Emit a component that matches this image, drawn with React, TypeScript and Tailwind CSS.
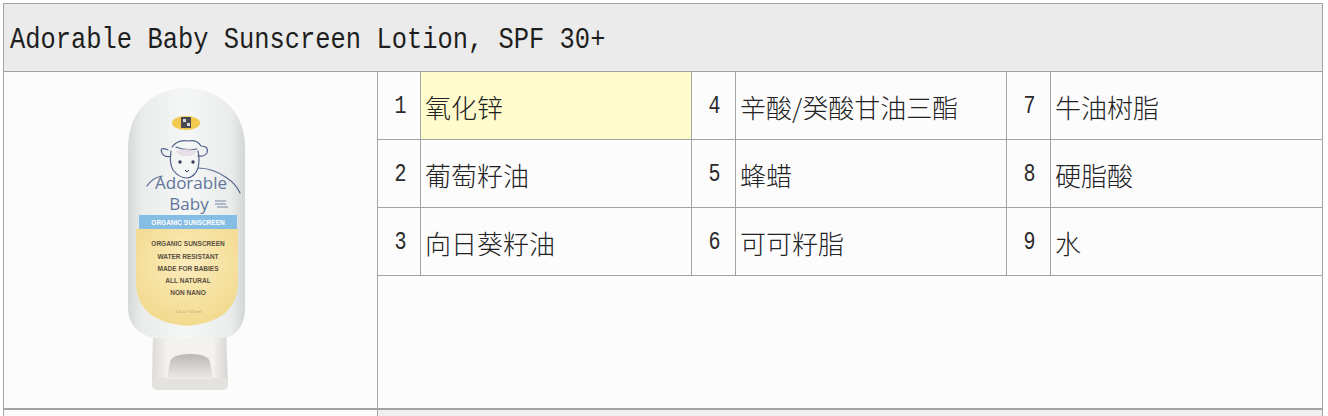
import React from "react";

const items: [string, string][] = [
  ["1", "氧化锌"],
  ["4", "辛酸/癸酸甘油三酯"],
  ["7", "牛油树脂"],
  ["2", "葡萄籽油"],
  ["5", "蜂蜡"],
  ["8", "硬脂酸"],
  ["3", "向日葵籽油"],
  ["6", "可可籽脂"],
  ["9", "水"],
];

function Bottle() {
  return (
    <svg width="373" height="337" viewBox="4 72 373 337" className="block">
      <defs>
        <linearGradient id="body" x1="0" x2="1" y1="0" y2="0">
          <stop offset="0" stopColor="#d6d9d9" />
          <stop offset="0.12" stopColor="#eaecec" />
          <stop offset="0.5" stopColor="#f5f6f6" />
          <stop offset="0.88" stopColor="#eaecec" />
          <stop offset="1" stopColor="#d3d6d6" />
        </linearGradient>
        <linearGradient id="cap" x1="0" x2="1" y1="0" y2="0">
          <stop offset="0" stopColor="#dcdad6" />
          <stop offset="0.2" stopColor="#f3f2ef" />
          <stop offset="0.8" stopColor="#f3f2ef" />
          <stop offset="1" stopColor="#d7d5d1" />
        </linearGradient>
        <radialGradient id="label" cx="0.5" cy="0.35" r="0.7">
          <stop offset="0" stopColor="#fbecbc" />
          <stop offset="1" stopColor="#f1d88a" />
        </radialGradient>
        <linearGradient id="notch" x1="0" x2="0" y1="0" y2="1">
          <stop offset="0" stopColor="#bbb8b3" />
          <stop offset="1" stopColor="#ecebe8" />
        </linearGradient>
      </defs>
      {/* cap */}
      <path d="M153,330 L226,330 L228,384 Q228,390 221,390 L159,390 Q152,390 152,384 Z" fill="url(#cap)" />
      <path d="M152,378 L228,378 L228,384 Q228,390 221,390 L159,390 Q152,390 152,384 Z" fill="#e4e2de" />
      <path d="M167,379 L170,362 Q172,354 190,354 Q208,354 210,362 L213,379 Z" fill="url(#notch)" />
      {/* body */}
      <path
        d="M128,148 C128,108 156,88 186,88 C216,88 245,108 245,148 L245,308 C245,326 236,336 224,338 L155,338 C141,336 128,326 128,308 Z"
        fill="url(#body)"
      />
      {/* yellow label */}
      <path d="M136,229 L238,229 L238,285 Q236,322 187,326 Q138,322 136,285 Z" fill="url(#label)" />
      {/* blue stripe */}
      <rect x="139" y="215" width="98" height="14" fill="#86bde4" />
      <text x="188" y="225" textAnchor="middle" fontSize="6.5" fill="#ffffff" fontFamily="Liberation Sans, sans-serif" fontWeight="bold">
        ORGANIC SUNSCREEN
      </text>
      {[
        ["ORGANIC SUNSCREEN", 246],
        ["WATER RESISTANT", 259],
        ["MADE FOR BABIES", 271],
        ["ALL NATURAL", 283],
        ["NON NANO", 295],
      ].map(([t, y]) => (
        <text
          key={t as string}
          x="188"
          y={y as number}
          textAnchor="middle"
          fontSize="6.5"
          fill="#5a5040"
          fontFamily="Liberation Sans, sans-serif"
          fontWeight="bold"
        >
          {t}
        </text>
      ))}
      <text x="188" y="313" textAnchor="middle" fontSize="4" fill="#b8a878" fontFamily="Liberation Sans, sans-serif">
        3.4 oz / 100 ml
      </text>
      {/* small yellow badge */}
      <ellipse cx="186" cy="123" rx="14" ry="7" fill="#f1c94e" />
      <rect x="181" y="117" width="10" height="11" fill="#4a4a52" />
      <rect x="183" y="119" width="3" height="3" fill="#d8d8d8" />
      <rect x="187" y="123" width="3" height="3" fill="#d8d8d8" />
      {/* sheep */}
      <g fill="none" stroke="#51648c" strokeWidth="1.2" strokeLinecap="round" strokeLinejoin="round">
        <path d="M168,150 Q159,146 162,153 Q165,158 171,156" />
        <path d="M172,147 Q178,139 188,141 Q197,139 201,146 Q209,146 207,153 Q204,157 198,156" />
        <path d="M171,151 Q169,163 173,170 Q179,178 187,178 Q195,177 198,168 Q200,160 198,151" />
        <path d="M176,147 Q185,151 197,149" />
        <path d="M162,176 Q152,178 147,186" />
        <path d="M198,168 Q213,168 227,178 Q236,184 240,193" />
      </g>
      <circle cx="180" cy="162" r="1.7" fill="#3a3a5a" />
      <circle cx="193" cy="162" r="1.7" fill="#3a3a5a" />
      <path d="M185,170 L187,172 L189,170" stroke="#3a3a5a" strokeWidth="1" fill="none" />
      <path d="M176,151 Q186,147 197,151 Q193,157 187,156 Q179,157 176,151 Z" fill="#e4d9e4" opacity="0.8" />
      {/* brand */}
      <text x="191" y="189" textAnchor="middle" fontSize="17" fill="#61759b" fontFamily="'Open Sans', sans-serif">
        Adorable
      </text>
      <text x="189" y="210" textAnchor="middle" fontSize="17" fill="#61759b" fontFamily="'Open Sans', sans-serif">
        Baby
      </text>
      <path d="M215,201 L226,201 M215,204 L226,204 M217,207 L228,207" stroke="#7a84a0" strokeWidth="1" />
    </svg>
  );
}

export default function App() {
  return (
    <div className="bg-white w-[1328px] h-[416px] overflow-hidden pt-[3px] pl-[3px]">
      <div className="w-[1320px] border-l border-t border-r border-[#a3a3a3]">
        <div className="h-[68px] bg-[#ebebeb] border-b border-[#a3a3a3] flex items-center pl-[6px] pt-[5px]">
          <span
            className="text-[30px] text-[#1e1e1e] leading-none whitespace-nowrap origin-left scale-x-[0.848] inline-block"
            style={{ fontFamily: "'Liberation Mono', 'Noto Sans CJK SC', monospace" }}
          >
            Adorable Baby Sunscreen Lotion, SPF 30+
          </span>
        </div>
        <div className="flex h-[338px] border-b-2 border-[#a3a3a3] bg-[#fdfcfd]">
          <div className="w-[374px] border-r border-[#a3a3a3] shrink-0">
            <Bottle />
          </div>
          <div className="flex-1">
            <div className="grid grid-cols-[43px_271px_44px_271px_44px_1fr]">
              {items.map(([n, name], i) => (
                <React.Fragment key={n}>
                  <div
                    className="h-[68px] border-b border-r border-[#a3a3a3] flex items-center justify-center text-[25px] text-[#2a2a2a] pl-[3px] pt-[3px]"
                    style={{ fontFamily: "'Liberation Mono', monospace" }}
                  >
                    <span className="inline-block scale-x-[0.8]">{n}</span>
                  </div>
                  <div
                    className={
                      (i === 0 ? "bg-[#fffbcc] " : "") +
                      (i % 3 < 2 ? "border-r " : "") +
                      "h-[68px] border-b border-[#a3a3a3] flex items-center pl-[4px] pt-[1px] text-[26px] font-light text-[#222222]"
                    }
                    style={{ fontFamily: "'Noto Sans CJK SC', sans-serif" }}
                  >
                    {name}
                  </div>
                </React.Fragment>
              ))}
            </div>
          </div>
        </div>
        <div className="flex h-[20px]">
          <div className="w-[374px] border-r border-[#a3a3a3] bg-[#fdfcfd]" />
          <div className="flex-1 bg-[#efeff0]" />
        </div>
      </div>
    </div>
  );
}
